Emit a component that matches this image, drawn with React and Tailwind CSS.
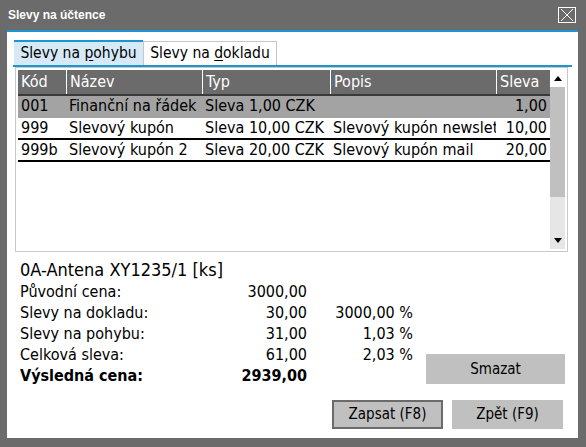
import React from "react";

const FONT = { fontFamily: '"DejaVu Sans Condensed", "DejaVu Sans", sans-serif' };

const rows = [
  { k: "001", n: "Finanční na řádek", t: "Sleva 1,00 CZK", p: "", s: "1,00", sel: true },
  { k: "999", n: "Slevový kupón", t: "Sleva 10,00 CZK", p: "Slevový kupón newsletter", s: "10,00" },
  { k: "999b", n: "Slevový kupón 2", t: "Sleva 20,00 CZK", p: "Slevový kupón mail", s: "20,00" },
];

const W = [48, 136, 128, 166, 54];

function Cell({ w, children, right }) {
  return (
    <div
      className={`h-full flex items-center overflow-hidden whitespace-nowrap px-[3px] ${right ? "justify-end" : ""}`}
      style={{ width: w }}
    >
      {children}
    </div>
  );
}

export default function App() {
  return (
    <div className="w-[586px] h-[447px] bg-[#6b6b6b] flex flex-col text-black" style={FONT}>
      <div className="h-[30px] flex items-center justify-between pl-[8px] pr-[10px]">
        <span
          className="text-white font-bold text-[12px]"
          style={{ fontFamily: '"Liberation Sans", Arial, sans-serif' }}
        >
          Slevy na účtence
        </span>
        <div className="w-[18px] h-[16px] border border-white flex items-center justify-center">
          <svg width="14" height="12" viewBox="0 0 14 12">
            <path d="M1 0 L13 12 M13 0 L1 12" stroke="white" strokeWidth="1" />
          </svg>
        </div>
      </div>
      <div className="ml-[7px] mr-[8px] h-[408px] bg-white border-t-2 border-[#1b96d3] flex flex-col px-[6px]">
        <div className="mt-[8px] flex h-[25px] pl-[1px] border-b-2 border-[#1b96d3] box-content">
          <div className="w-[129px] h-[25px] bg-[#d5eaf6] border-t-2 border-[#1b96d3] flex items-center justify-center text-[15.5px]">
            <span>
              Slevy na <span className="underline underline-offset-2">p</span>ohybu
            </span>
          </div>
          <div className="w-[134px] h-[24px] mt-[1px] border border-b-0 border-[#c6c6c6] flex items-center justify-center text-[15.5px]">
            <span>
              Slevy na <span className="underline underline-offset-2">d</span>okladu
            </span>
          </div>
        </div>
        <div className="ml-[2px] mr-[4px] h-[185px] border border-[#c8c8c8] p-[2px] flex">
          <div className="flex-1 flex flex-col text-[16px]">
            <div className="h-[24px] bg-[#6b6b6b] text-white flex border-b-2 border-[#3a3a3a] box-content">
              {["Kód", "Název", "Typ", "Popis", "Sleva"].map((h, i) => (
                <div
                  key={h}
                  className={`h-[24px] flex items-center px-[3px] ${i > 0 ? "border-l border-white" : ""}`}
                  style={{ width: W[i] }}
                >
                  {h}
                </div>
              ))}
            </div>
            {rows.map((r) => (
              <div
                key={r.k}
                className={`h-[22px] flex border-b-2 ${r.sel ? "bg-[#a3a3a3] border-[#a3a3a3]" : "border-black"}`}
              >
                <Cell w={W[0]}>{r.k}</Cell>
                <Cell w={W[1]}>{r.n}</Cell>
                <Cell w={W[2]}>{r.t}</Cell>
                <Cell w={W[3]}>{r.p}</Cell>
                <Cell w={W[4]} right>
                  {r.s}
                </Cell>
              </div>
            ))}
          </div>
          <div className="w-[15px] bg-[#e6e6e6] flex flex-col items-center">
            <div className="h-[17px] w-full bg-white flex items-center justify-center">
              <svg width="8" height="5" viewBox="0 0 8 5">
                <path d="M4 0 L8 5 L0 5 Z" fill="black" />
              </svg>
            </div>
            <div className="h-[110px] w-full bg-[#c0c0c0]" />
            <div className="flex-1" />
            <div className="h-[17px] w-full flex items-center justify-center">
              <svg width="8" height="5" viewBox="0 0 8 5">
                <path d="M0 0 L8 0 L4 5 Z" fill="black" />
              </svg>
            </div>
          </div>
        </div>
        <div className="mt-[6px] pl-[7px] text-[18px] leading-[23px] whitespace-nowrap">0A-Antena XY1235/1 [ks]</div>
        <div className="flex">
          <div className="flex flex-col text-[16px] pl-[7px] whitespace-nowrap">
            {[
              ["Původní cena:", "3000,00", ""],
              ["Slevy na dokladu:", "30,00", "3000,00 %"],
              ["Slevy na pohybu:", "31,00", "1,03 %"],
              ["Celková sleva:", "61,00", "2,03 %"],
            ].map(([a, b, c]) => (
              <div key={a} className="flex h-[21px] items-center">
                <div className="w-[180px]">{a}</div>
                <div className="w-[107px] text-right">{b}</div>
                <div className="w-[106px] text-right">{c}</div>
              </div>
            ))}
            <div className="flex h-[21px] items-center font-bold">
              <div className="w-[180px]">Výsledná cena:</div>
              <div className="w-[107px] text-right">2939,00</div>
            </div>
          </div>
          <div className="flex-1 flex items-end justify-end pb-[2px] pr-[7px]">
            <div className="w-[139px] h-[30px] bg-[#c0c0c0] flex items-center justify-center text-[15px]">
              Smazat
            </div>
          </div>
        </div>
        <div className="mt-[14px] flex justify-end gap-[9px] pr-[9px]">
          <div className="w-[111px] h-[29px] bg-[#c0c0c0] border-2 border-[#6b6b6b] flex items-center justify-center text-[15px]">
            Zapsat (F8)
          </div>
          <div className="w-[111px] h-[29px] bg-[#c0c0c0] flex items-center justify-center text-[15px]">
            Zpět (F9)
          </div>
        </div>
      </div>
    </div>
  );
}
